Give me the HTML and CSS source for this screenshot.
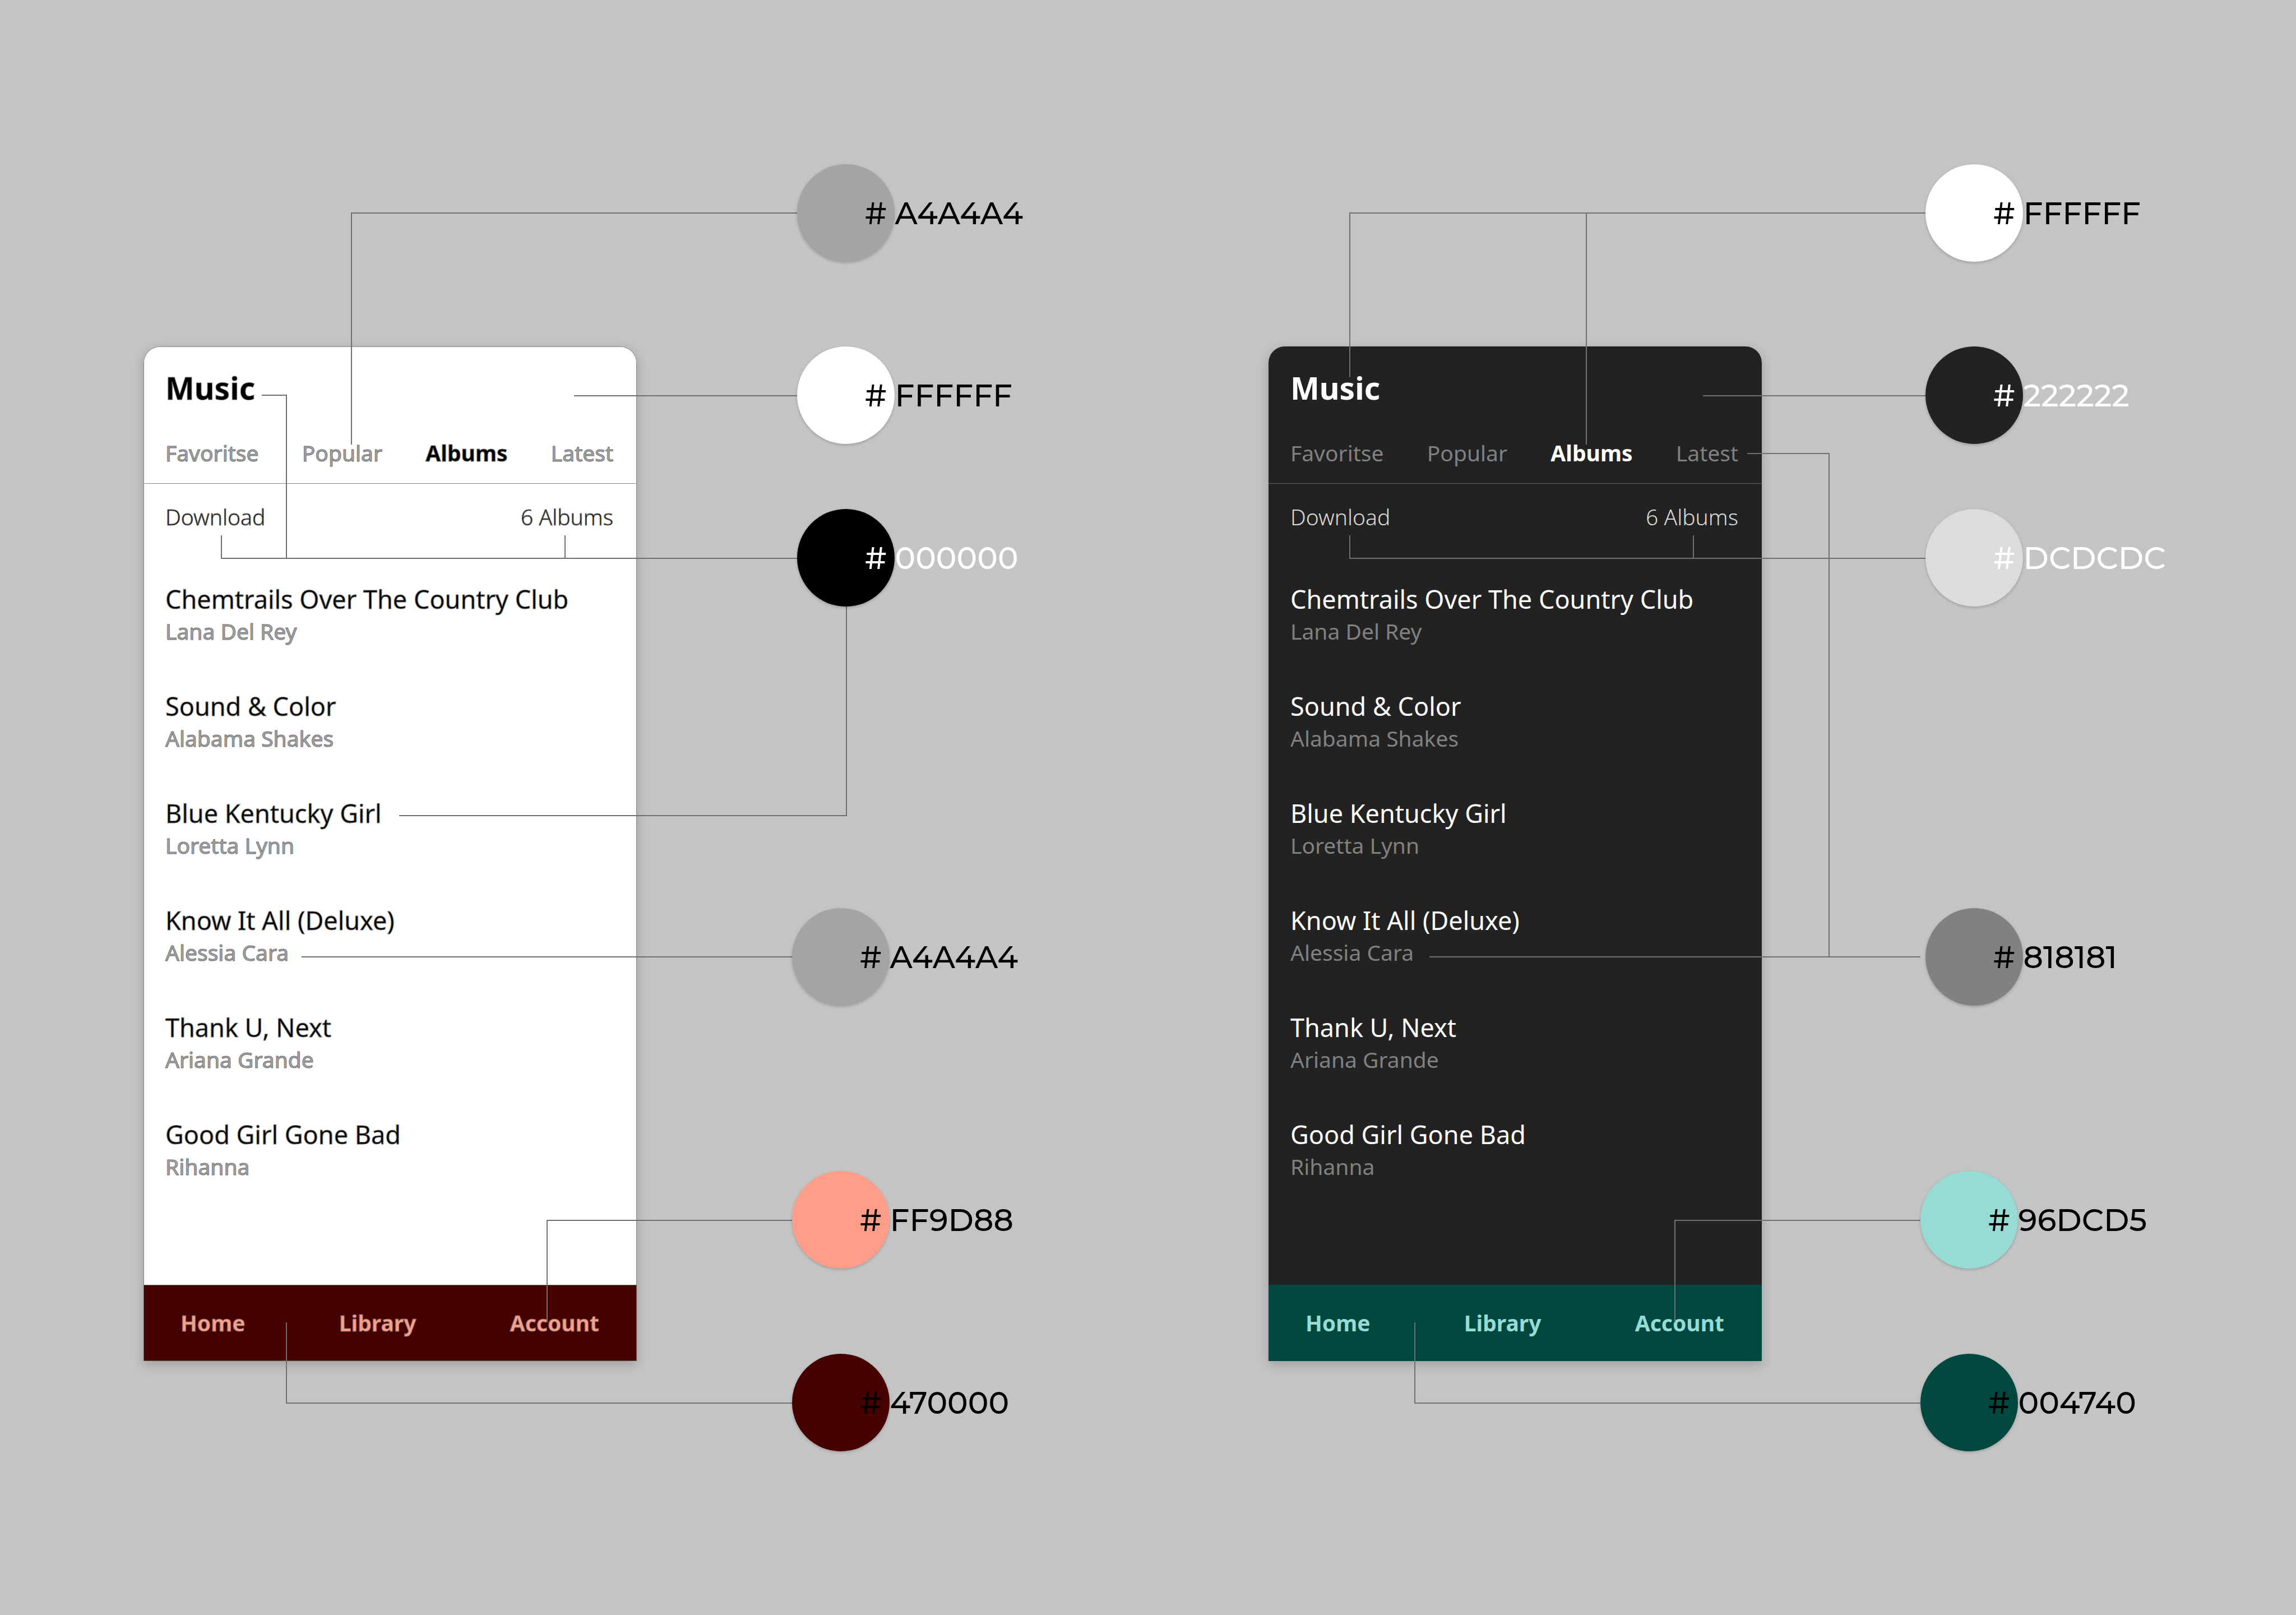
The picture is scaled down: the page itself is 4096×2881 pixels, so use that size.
FILE: index.html
```html
<!DOCTYPE html>
<html lang="en">
<head>
<meta charset="utf-8">
<meta name="viewport" content="width=device-width, initial-scale=1">
<title>Music – colour themes</title>
<link rel="stylesheet" href="styles.css">
</head>
<body>
<main class="board">
  <section class="theme theme-light" aria-label="Light theme">
    <article class="phone">
      <header class="phone-header">
        <h1 class="phone-title">Music</h1>
        <div class="tabs">
          <button class="tab" type="button">Favoritse</button>
          <button class="tab" type="button">Popular</button>
          <button class="tab tab-active" type="button">Albums</button>
          <button class="tab" type="button">Latest</button>
        </div>
      </header>
      <div class="summary">
        <button class="download" type="button">Download</button>
        <span>6 Albums</span>
      </div>
      <ul class="albums">
        <li><h2 class="album-name">Chemtrails Over The Country Club</h2><p class="artist">Lana Del Rey</p></li>
        <li><h2 class="album-name">Sound &amp; Color</h2><p class="artist">Alabama Shakes</p></li>
        <li><h2 class="album-name">Blue Kentucky Girl</h2><p class="artist">Loretta Lynn</p></li>
        <li><h2 class="album-name">Know It All (Deluxe)</h2><p class="artist">Alessia Cara</p></li>
        <li><h2 class="album-name">Thank U, Next</h2><p class="artist">Ariana Grande</p></li>
        <li><h2 class="album-name">Good Girl Gone Bad</h2><p class="artist">Rihanna</p></li>
      </ul>
      <nav class="bottom-nav">
        <a href="#home">Home</a>
        <a href="#library">Library</a>
        <a href="#account">Account</a>
      </nav>
    </article>
    <svg class="connectors" viewBox="0 0 1750 2520" preserveAspectRatio="none" aria-hidden="true">
      <path d="M1168 380H371V793"/>
      <path d="M1168 706H768"/>
      <path d="M211 705H255V996"/>
      <path d="M139 955V996H1168M752 955V996"/>
      <path d="M1254 1080V1455H456"/>
      <path d="M282 1707H1159"/>
      <path d="M1159 2177H720V2359"/>
      <path d="M1159 2503H255V2359"/>
    </svg>
    <ul class="palette">
      <li class="swatch"><span class="dot dot-a4a4a4"></span><span class="hex"># A4A4A4</span></li>
      <li class="swatch"><span class="dot dot-ffffff"></span><span class="hex"># FFFFFF</span></li>
      <li class="swatch"><span class="dot dot-000000"></span><span class="hex hex-light"># 000000</span></li>
      <li class="swatch shifted"><span class="dot dot-a4a4a4"></span><span class="hex"># A4A4A4</span></li>
      <li class="swatch shifted"><span class="dot dot-ff9d88"></span><span class="hex"># FF9D88</span></li>
      <li class="swatch shifted"><span class="dot dot-470000"></span><span class="hex"># 470000</span></li>
    </ul>
  </section>

  <section class="theme theme-dark" aria-label="Dark theme">
    <article class="phone">
      <header class="phone-header">
        <h1 class="phone-title">Music</h1>
        <div class="tabs">
          <button class="tab" type="button">Favoritse</button>
          <button class="tab" type="button">Popular</button>
          <button class="tab tab-active" type="button">Albums</button>
          <button class="tab" type="button">Latest</button>
        </div>
      </header>
      <div class="summary">
        <button class="download" type="button">Download</button>
        <span>6 Albums</span>
      </div>
      <ul class="albums">
        <li><h2 class="album-name">Chemtrails Over The Country Club</h2><p class="artist">Lana Del Rey</p></li>
        <li><h2 class="album-name">Sound &amp; Color</h2><p class="artist">Alabama Shakes</p></li>
        <li><h2 class="album-name">Blue Kentucky Girl</h2><p class="artist">Loretta Lynn</p></li>
        <li><h2 class="album-name">Know It All (Deluxe)</h2><p class="artist">Alessia Cara</p></li>
        <li><h2 class="album-name">Thank U, Next</h2><p class="artist">Ariana Grande</p></li>
        <li><h2 class="album-name">Good Girl Gone Bad</h2><p class="artist">Rihanna</p></li>
      </ul>
      <nav class="bottom-nav">
        <a href="#home">Home</a>
        <a href="#library">Library</a>
        <a href="#account">Account</a>
      </nav>
    </article>
    <svg class="connectors" viewBox="0 0 1750 2520" preserveAspectRatio="none" aria-hidden="true">
      <path d="M1174 380H145V673M567 380V793"/>
      <path d="M1174 706H775"/>
      <path d="M854 809H1000V1707"/>
      <path d="M145 955V996H1174M758 955V996"/>
      <path d="M287 1707H1163"/>
      <path d="M1165 2177H725V2359"/>
      <path d="M1165 2503H261V2359"/>
    </svg>
    <ul class="palette">
      <li class="swatch"><span class="dot dot-ffffff"></span><span class="hex"># FFFFFF</span></li>
      <li class="swatch"><span class="dot dot-222222"></span><span class="hex hex-light"># 222222</span></li>
      <li class="swatch"><span class="dot dot-dcdcdc"></span><span class="hex hex-light"># DCDCDC</span></li>
      <li class="swatch"><span class="dot dot-818181"></span><span class="hex"># 818181</span></li>
      <li class="swatch shifted"><span class="dot dot-96dcd5"></span><span class="hex"># 96DCD5</span></li>
      <li class="swatch shifted"><span class="dot dot-004740"></span><span class="hex"># 004740</span></li>
    </ul>
  </section>
</main>
</body>
</html>
```
FILE: styles.css
```css
* {
  box-sizing: border-box;
}

body {
  margin: 0;
  min-height: 100vh;
  background: #c4c4c4;
  font-family: "Noto Sans", "Open Sans", sans-serif;
}

h1, h2, p, ul {
  margin: 0;
  padding: 0;
}

ul {
  list-style: none;
}

button {
  padding: 0;
  border: 0;
  background: none;
  color: inherit;
  font: inherit;
}

.board {
  display: grid;
  grid-template-columns: 1fr 1fr;
  column-gap: 257px;
  padding: 0 83px 0 256px;
}

.theme {
  position: relative;
  display: grid;
  grid-template-columns: 88fr 87fr;
  align-items: start;
}

.theme-light {
  --surface: #ffffff;
  --text: #000000;
  --summary: #000000;
  --muted: #a4a4a4;
  --edge: #868686;
  --divider: #868686;
  --outline: 1px #707070;
  --nav: #470000;
  --nav-edge: #685c5c;
  --nav-text: #ff9d88;
  --palette-indent: 286px;
}

.theme-dark {
  --surface: #222222;
  --text: #ffffff;
  --summary: #dcdcdc;
  --muted: #818181;
  --edge: transparent;
  --divider: #606060;
  --outline: 0 transparent;
  --nav: #004740;
  --nav-edge: transparent;
  --nav-text: #96dcd5;
  --palette-indent: 292px;
}

/* Phone mock-up */

.phone {
  margin-top: 618px;
  border-radius: 29px 29px 0 0;
  background: var(--surface);
  color: var(--text);
  box-shadow: inset 0 0 0 1px var(--edge), 0 6px 20px rgba(0, 0, 0, 0.2);
  font-size: 39px;
  line-height: 54px;
  -webkit-text-stroke: var(--outline);
}

.phone-header {
  padding: 36px 42px 27px 39px;
  border-bottom: 1px solid var(--divider);
}

.phone-title {
  font-size: 55px;
  line-height: 76px;
  font-weight: 700;
}

.tabs {
  display: flex;
  justify-content: space-between;
  margin-top: 51px;
}

.tab {
  color: var(--muted);
  -webkit-text-stroke: var(--outline);
}

.tab-active {
  color: var(--text);
  font-weight: 700;
}

.summary {
  display: flex;
  justify-content: space-between;
  padding: 32px 42px 0 39px;
  color: var(--summary);
  font-weight: 300;
}

.download {
  -webkit-text-stroke: var(--outline);
}

.albums {
  display: grid;
  row-gap: 77px;
  padding: 90px 39px 184px;
}

.album-name {
  font-size: 45px;
  line-height: 60px;
  font-weight: 400;
}

.artist {
  color: var(--muted);
}

.bottom-nav {
  display: flex;
  justify-content: space-between;
  padding: 41px 67px 41px 66px;
  background: var(--nav);
  box-shadow: inset 0 0 0 1px var(--nav-edge);
}

.bottom-nav a {
  color: var(--nav-text);
  font-weight: 700;
  text-decoration: none;
}

/* Lines from each colour to the parts that use it */

.connectors {
  position: absolute;
  top: 0;
  left: 0;
  width: 100%;
  height: 2520px;
  fill: none;
  stroke: #707070;
  stroke-width: 2px;
  pointer-events: none;
}

.connectors path {
  vector-effect: non-scaling-stroke;
}

/* Palette */

.palette {
  position: relative;
  padding: 293px 0 0 var(--palette-indent);
}

.swatch {
  display: flex;
  align-items: center;
}

.swatch:nth-child(2) {
  margin-top: 151px;
}

.swatch:nth-child(3) {
  margin-top: 116px;
}

.swatch:nth-child(4) {
  margin-top: 538px;
}

.swatch:nth-child(5) {
  margin-top: 295px;
}

.swatch:nth-child(6) {
  margin-top: 152px;
}

.shifted {
  margin-left: -9px;
}

.dot {
  flex: none;
  width: 174px;
  height: 174px;
  border-radius: 50%;
  box-shadow: 0 2px 5px rgba(0, 0, 0, 0.2);
}

.dot-a4a4a4 { background: #a4a4a4; }
.dot-ffffff { background: #ffffff; }
.dot-000000 { background: #000000; }
.dot-ff9d88 { background: #ff9d88; }
.dot-470000 { background: #470000; }
.dot-222222 { background: #222222; }
.dot-dcdcdc { background: #dcdcdc; }
.dot-818181 { background: #818181; }
.dot-96dcd5 { background: #96dcd5; }
.dot-004740 { background: #004740; }

.hex {
  margin-left: -53px;
  padding-top: 2px;
  color: #000000;
  font-family: Montserrat, Inter, sans-serif;
  font-size: 55px;
  line-height: 68px;
  font-weight: 500;
  white-space: nowrap;
}

.hex-light {
  color: #ffffff;
}
```
